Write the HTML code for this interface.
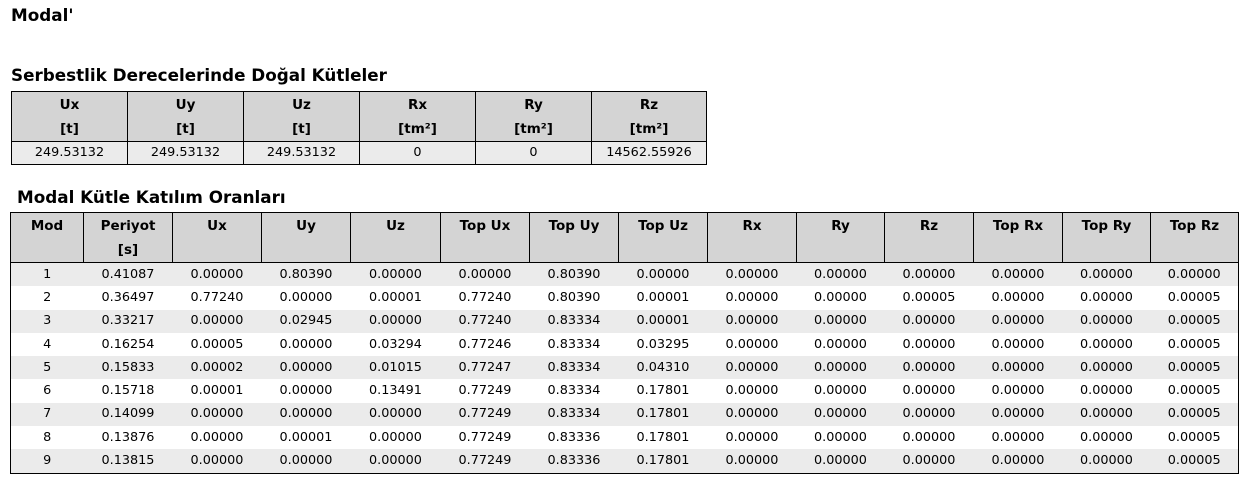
<!DOCTYPE html>
<html><head><meta charset="utf-8"><style>
body{margin:0;background:#fff;font-family:"DejaVu Sans","Liberation Sans",sans-serif;color:#000;width:1248px;height:482px;overflow:hidden;position:relative}
.t{position:absolute;font-weight:bold;font-size:16.8px;white-space:nowrap}
table{position:absolute;border-collapse:collapse;table-layout:fixed}
th{background:#d4d4d4;border:1px solid #000;font-size:13.5px;font-weight:bold;vertical-align:top;line-height:24px;padding:1px 0 0;text-align:center}
td{font-size:12.8px;text-align:center;padding:0;height:23px;line-height:20px}
#a td{border:1px solid #000;background:#ebebeb;height:22px}
#a th{height:48px}
#b{border:1px solid #000}
#b tr:nth-child(even) td{background:#ebebeb}
#b th{height:48px}
#b td{height:23.3px}
</style></head><body>
<div class="t" style="left:11px;top:5px">Modal'</div>
<div class="t" style="left:11px;top:65px">Serbestlik Derecelerinde Doğal Kütleler</div>
<table id="a" style="left:11px;top:91px;width:695px">
<colgroup><col style="width:116px"><col style="width:116px"><col style="width:116px"><col style="width:116px"><col style="width:116px"><col style="width:115px"></colgroup>
<tr><th>Ux<br>[t]</th><th>Uy<br>[t]</th><th>Uz<br>[t]</th><th>Rx<br>[tm²]</th><th>Ry<br>[tm²]</th><th>Rz<br>[tm²]</th></tr>
<tr><td>249.53132</td><td>249.53132</td><td>249.53132</td><td>0</td><td>0</td><td>14562.55926</td></tr>
</table>
<div class="t" style="left:17px;top:187px">Modal Kütle Katılım Oranları</div>
<table id="b" style="left:10px;top:212px;width:1228px">
<colgroup><col style="width:73px"><col style="width:89px"><col style="width:89px"><col style="width:89px"><col style="width:90px"><col style="width:89px"><col style="width:89px"><col style="width:89px"><col style="width:89px"><col style="width:88px"><col style="width:89px"><col style="width:89px"><col style="width:88px"><col style="width:88px"></colgroup>
<tr><th>Mod</th><th>Periyot<br>[s]</th><th>Ux</th><th>Uy</th><th>Uz</th><th>Top Ux</th><th>Top Uy</th><th>Top Uz</th><th>Rx</th><th>Ry</th><th>Rz</th><th>Top Rx</th><th>Top Ry</th><th>Top Rz</th></tr>
<tr><td>1</td><td>0.41087</td><td>0.00000</td><td>0.80390</td><td>0.00000</td><td>0.00000</td><td>0.80390</td><td>0.00000</td><td>0.00000</td><td>0.00000</td><td>0.00000</td><td>0.00000</td><td>0.00000</td><td>0.00000</td></tr>
<tr><td>2</td><td>0.36497</td><td>0.77240</td><td>0.00000</td><td>0.00001</td><td>0.77240</td><td>0.80390</td><td>0.00001</td><td>0.00000</td><td>0.00000</td><td>0.00005</td><td>0.00000</td><td>0.00000</td><td>0.00005</td></tr>
<tr><td>3</td><td>0.33217</td><td>0.00000</td><td>0.02945</td><td>0.00000</td><td>0.77240</td><td>0.83334</td><td>0.00001</td><td>0.00000</td><td>0.00000</td><td>0.00000</td><td>0.00000</td><td>0.00000</td><td>0.00005</td></tr>
<tr><td>4</td><td>0.16254</td><td>0.00005</td><td>0.00000</td><td>0.03294</td><td>0.77246</td><td>0.83334</td><td>0.03295</td><td>0.00000</td><td>0.00000</td><td>0.00000</td><td>0.00000</td><td>0.00000</td><td>0.00005</td></tr>
<tr><td>5</td><td>0.15833</td><td>0.00002</td><td>0.00000</td><td>0.01015</td><td>0.77247</td><td>0.83334</td><td>0.04310</td><td>0.00000</td><td>0.00000</td><td>0.00000</td><td>0.00000</td><td>0.00000</td><td>0.00005</td></tr>
<tr><td>6</td><td>0.15718</td><td>0.00001</td><td>0.00000</td><td>0.13491</td><td>0.77249</td><td>0.83334</td><td>0.17801</td><td>0.00000</td><td>0.00000</td><td>0.00000</td><td>0.00000</td><td>0.00000</td><td>0.00005</td></tr>
<tr><td>7</td><td>0.14099</td><td>0.00000</td><td>0.00000</td><td>0.00000</td><td>0.77249</td><td>0.83334</td><td>0.17801</td><td>0.00000</td><td>0.00000</td><td>0.00000</td><td>0.00000</td><td>0.00000</td><td>0.00005</td></tr>
<tr><td>8</td><td>0.13876</td><td>0.00000</td><td>0.00001</td><td>0.00000</td><td>0.77249</td><td>0.83336</td><td>0.17801</td><td>0.00000</td><td>0.00000</td><td>0.00000</td><td>0.00000</td><td>0.00000</td><td>0.00005</td></tr>
<tr><td>9</td><td>0.13815</td><td>0.00000</td><td>0.00000</td><td>0.00000</td><td>0.77249</td><td>0.83336</td><td>0.17801</td><td>0.00000</td><td>0.00000</td><td>0.00000</td><td>0.00000</td><td>0.00000</td><td>0.00005</td></tr>
</table>
</body></html>
